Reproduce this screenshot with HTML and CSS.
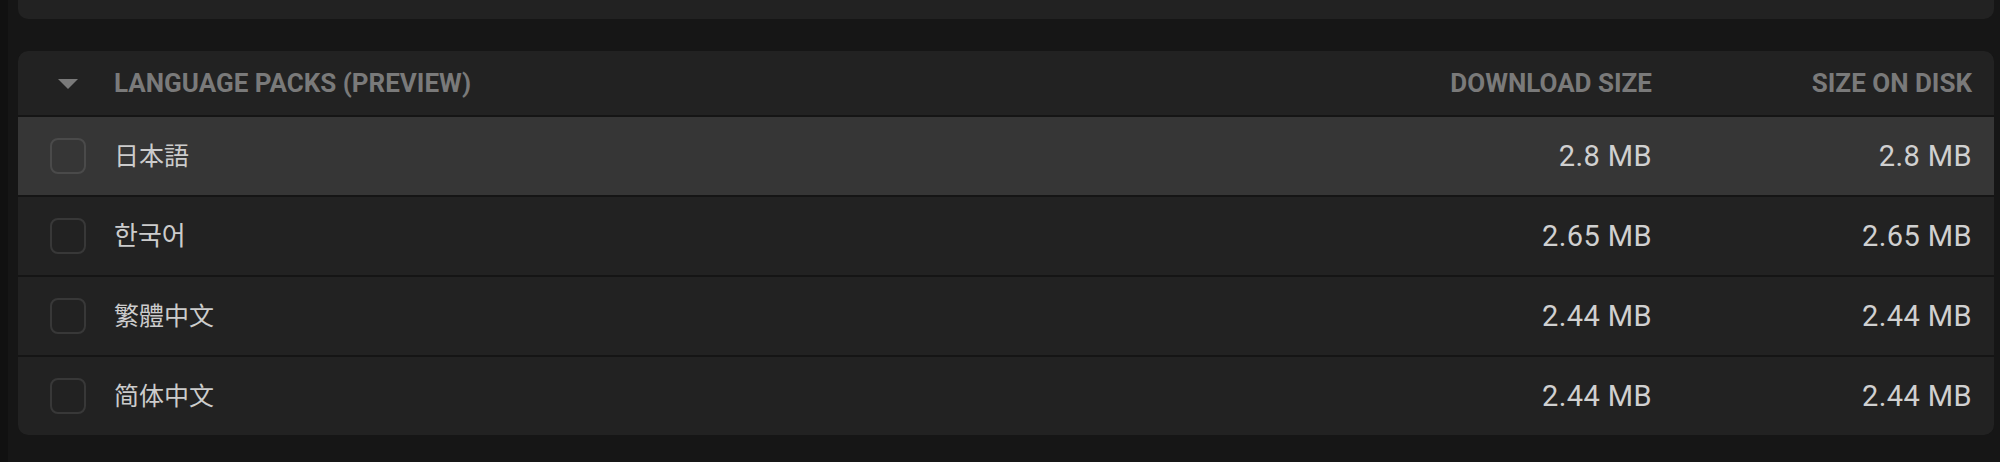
FILE: index.html
```html
<!DOCTYPE html>
<html lang="en">
<head>
<meta charset="utf-8">
<title>Language packs</title>
<link rel="stylesheet" href="styles.css">
</head>
<body>
<div class="page">
  <div class="strip"></div>
  <main class="content">
    <section class="card card-top"></section>
    <section class="card packs">
      <div class="row head">
        <span class="cell chev"><svg width="20" height="10" viewBox="0 0 20 10"><path d="M0 0 H20 L10 10 Z" fill="#7a7a7a"/></svg></span>
        <span class="cell name">LANGUAGE PACKS (PREVIEW)</span>
        <span class="cell size">DOWNLOAD SIZE</span>
        <span class="cell size">SIZE ON DISK</span>
      </div>
      <div class="row item active">
        <span class="cell"><span class="box"></span></span>
        <span class="cell name ja" lang="ja">日本語</span>
        <span class="cell size">2.8 MB</span>
        <span class="cell size">2.8 MB</span>
      </div>
      <div class="row item">
        <span class="cell"><span class="box"></span></span>
        <span class="cell name ko" lang="ko">한국어</span>
        <span class="cell size">2.65 MB</span>
        <span class="cell size">2.65 MB</span>
      </div>
      <div class="row item">
        <span class="cell"><span class="box"></span></span>
        <span class="cell name tc" lang="zh-Hant">繁體中文</span>
        <span class="cell size">2.44 MB</span>
        <span class="cell size">2.44 MB</span>
      </div>
      <div class="row item">
        <span class="cell"><span class="box"></span></span>
        <span class="cell name sc" lang="zh-Hans">简体中文</span>
        <span class="cell size">2.44 MB</span>
        <span class="cell size">2.44 MB</span>
      </div>
    </section>
  </main>
</div>
</body>
</html>
```

FILE: styles.css
```css
* { box-sizing: border-box; }
html, body { margin: 0; padding: 0; }
body {
  background: #161616;
  font-family: Roboto, "Noto Sans", sans-serif;
  width: 2000px;
  height: 462px;
  overflow: hidden;
}
.page {
  display: flex;
  height: 462px;
}
.strip {
  width: 8px;
  flex: none;
  background: #111111;
}
.content {
  flex: 1;
  padding: 0 6px 0 10px;
  display: flex;
  flex-direction: column;
  gap: 32px;
}
.card {
  background: #222222;
  border-radius: 10px;
}
.card-top {
  height: 19px;
  border-radius: 0 0 10px 10px;
}
.packs {
  height: 384px;
  overflow: hidden;
  display: flex;
  flex-direction: column;
  gap: 2px;
  background: #151515;
}
.row {
  display: grid;
  grid-template-columns: 36px 1fr 320px 320px;
  align-items: center;
  padding: 0 22px 0 32px;
  background: #222222;
}
.head {
  height: 64px;
  color: #7a7a7a;
  font-weight: 700;
  font-size: 26px;
}
.item {
  height: 78px;
  color: #d0d0d0;
  font-size: 29px;
  letter-spacing: 0.4px;
}
.item.active { background: #363636; }
.cell { display: flex; align-items: center; }
.name { padding-left: 28px; }
.chev { justify-content: center; padding-top: 2px; }
.size { justify-content: flex-end; }
.head .size, .head .name { white-space: nowrap; }
.box {
  width: 36px;
  height: 36px;
  border: 2px solid rgba(255,255,255,0.1);
  border-radius: 8px;
}
.ja { font-family: "Noto Sans CJK JP", sans-serif; }
.ko { font-family: "Noto Sans CJK KR", sans-serif; }
.tc { font-family: "Noto Sans CJK TC", sans-serif; }
.sc { font-family: "Noto Sans CJK SC", sans-serif; }
.name.ja, .name.tc, .name.sc { font-size: 25px; letter-spacing: 0; color: #cccccc; padding-bottom: 5px; }
.name.ko { font-size: 26px; letter-spacing: 0; color: #cccccc; padding-bottom: 5px; }
```
